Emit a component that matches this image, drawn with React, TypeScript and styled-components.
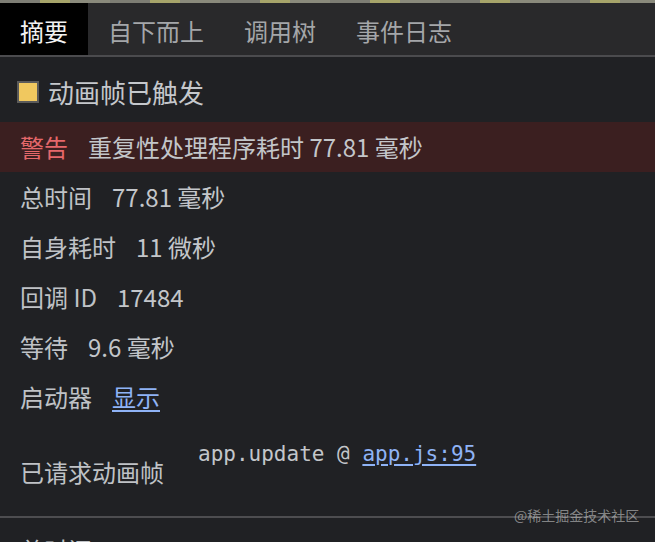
import React from 'react'
import styled, { createGlobalStyle } from 'styled-components'

const GlobalStyle = createGlobalStyle`
    html, body {
        margin: 0;
        padding: 0;
        background: #202124;
    }
    body {
        font-family: "Noto Sans CJK SC", "Noto Sans", sans-serif;
        color: #c3c6ca;
        overflow: hidden;
    }
`

const Wrap = styled.div`
    position: relative;
    width: 655px;
    height: 542px;
    overflow: hidden;
    background: #202124;
`
const TopStrip = styled.div`
    height: 3px;
    background: repeating-linear-gradient(90deg, #7d7d74 0 40px, #a6a46a 40px 70px, #8a8a7c 70px 110px);
`
const TabBar = styled.div`
    display: flex;
    height: 52px;
    background: #29292b;
    border-bottom: 2px solid #4b4b4e;
`
const Tab = styled.div<{ $active?: boolean }>`
    display: flex;
    align-items: center;
    padding: 4px 20px 0;
    font-size: 24px;
    line-height: 1;
    background: ${p => p.$active ? '#000' : 'transparent'};
    color: ${p => p.$active ? '#f1f1f1' : '#a4a6a9'};
`
const Title = styled.div`
    display: flex;
    align-items: center;
    gap: 9px;
    padding: 12px 17px 8px;
    height: 45px;
    font-size: 26px;
    color: #c5c8cc;
`
const Swatch = styled.span`
    width: 18px;
    height: 18px;
    background: #f0c85f;
    border: 2px solid #5a5a5a;
    box-sizing: content-box;
`
const Row = styled.div<{ $warning?: boolean }>`
    display: flex;
    align-items: center;
    gap: 20px;
    height: 50px;
    padding: 0 20px;
    font-size: 24px;
    line-height: 1;
    background: ${p => p.$warning ? '#3b1f20' : 'transparent'};
`
const Label = styled.span<{ $warning?: boolean }>`
    color: ${p => p.$warning ? '#e5676a' : '#bfc2c6'};
    white-space: nowrap;
`
const Value = styled.span`
    color: #c3c6ca;
    white-space: nowrap;
`
const Link = styled.a`
    color: #8fb3f6;
    text-decoration: underline;
    text-underline-offset: 3px;
    cursor: pointer;
`
const StackRow = styled.div`
    display: flex;
    align-items: flex-start;
    gap: 34px;
    height: 94px;
    padding: 0 20px;
    font-size: 24px;
    line-height: 1;
`
const StackLabel = styled.span`
    color: #bfc2c6;
    margin-top: 38px;
    white-space: nowrap;
`
const StackTrace = styled.div`
    margin-top: 22px;
    font-family: "DejaVu Sans Mono", "Liberation Mono", monospace;
    font-size: 21px;
    color: #c3c6ca;
    white-space: nowrap;
`
const Divider = styled.div`
    height: 2px;
    background: #4d4d50;
`
const SectionTitle = styled.div`
    padding: 14px 20px 0;
    font-size: 24px;
    color: #bfc2c6;
`
const Watermark = styled.div`
    position: absolute;
    left: 514px;
    top: 505px;
    font-size: 14px;
    line-height: 20px;
    color: rgba(190, 190, 190, 0.65);
    white-space: nowrap;
`

const tabs = ['摘要', '自下而上', '调用树', '事件日志']

const rows: { label: string, value: string }[] = [
    { label: '总时间', value: '77.81 毫秒' },
    { label: '自身耗时', value: '11 微秒' },
    { label: '回调 ID', value: '17484' },
    { label: '等待', value: '9.6 毫秒' },
]

const App = () => {
    return (
        <Wrap>
            <GlobalStyle />
            <TopStrip />
            <TabBar>
                {tabs.map((t, i) => <Tab key={t} $active={i === 0}>{t}</Tab>)}
            </TabBar>
            <Title>
                <Swatch />
                动画帧已触发
            </Title>
            <Row $warning>
                <Label $warning>警告</Label>
                <Value>重复性处理程序耗时 77.81 毫秒</Value>
            </Row>
            {rows.map(r => (
                <Row key={r.label}>
                    <Label>{r.label}</Label>
                    <Value>{r.value}</Value>
                </Row>
            ))}
            <Row>
                <Label>启动器</Label>
                <Link>显示</Link>
            </Row>
            <StackRow>
                <StackLabel>已请求动画帧</StackLabel>
                <StackTrace>app.update @ <Link>app.js:95</Link></StackTrace>
            </StackRow>
            <Divider />
            <SectionTitle>总时间</SectionTitle>
            <Watermark>@稀土掘金技术社区</Watermark>
        </Wrap>
    )
}

export default App
